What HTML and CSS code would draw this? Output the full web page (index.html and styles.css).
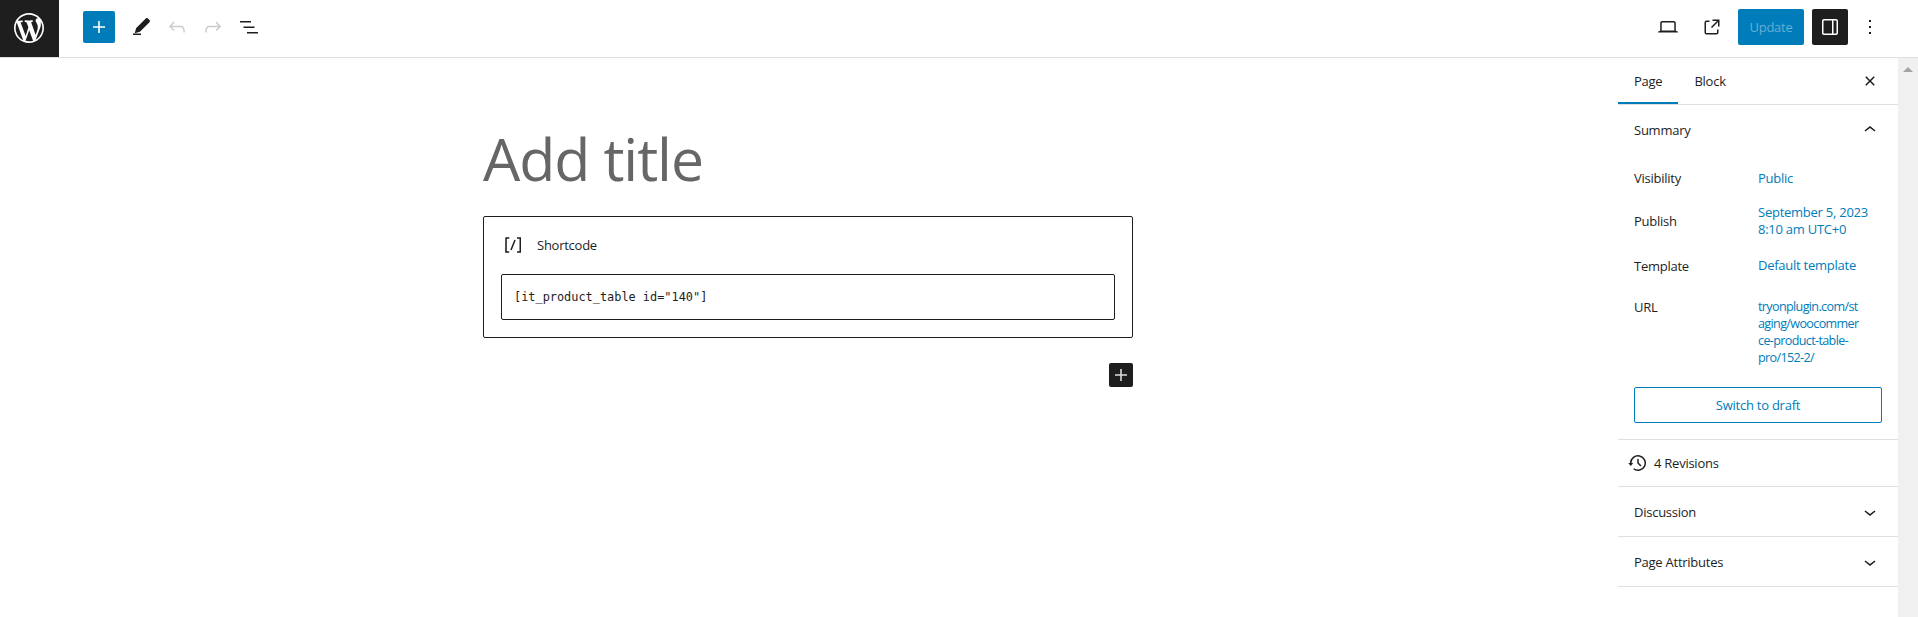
FILE: index.html
```html
<!DOCTYPE html>
<html lang="en">
<head>
    <meta charset="UTF-8">
    <meta name="viewport" content="width=device-width, initial-scale=1.0">
    <title>Edit Page</title>
    <link rel="stylesheet" href="styles.css">
</head>
<body>
    <!-- Top Toolbar -->
    <header class="topbar">
        <a class="logo" href="#">
            <svg width="30" height="30" viewBox="0 0 20 20"><path d="M20 10c0-5.51-4.49-10-10-10C4.48 0 0 4.49 0 10c0 5.52 4.48 10 10 10 5.51 0 10-4.48 10-10zM7.78 15.37L4.37 6.22c.55-.02 1.17-.08 1.17-.08.5-.06.44-1.13-.06-1.11 0 0-1.45.11-2.37.11-.18 0-.37 0-.58-.01C4.12 2.69 6.87 1.11 10 1.11c2.33 0 4.45.87 6.05 2.34-.68-.11-1.65.39-1.65 1.58 0 .74.45 1.36.9 2.1.35.61.55 1.36.55 2.46 0 1.49-1.4 5-1.4 5l-3.03-8.37c.54-.02.82-.17.82-.17.5-.05.44-1.25-.06-1.22 0 0-1.44.12-2.38.12-.87 0-2.33-.12-2.33-.12-.5-.03-.56 1.2-.06 1.22l.92.08 1.26 3.41zM17.41 10c.24-.64.74-1.87.43-4.25.7 1.29 1.05 2.71 1.05 4.25 0 3.29-1.73 6.24-4.4 7.78.97-2.59 1.94-5.2 2.92-7.78zM6.1 18.09C3.12 16.65 1.11 13.53 1.11 10c0-1.3.23-2.48.72-3.59C3.25 10.3 4.67 14.2 6.1 18.09zm4.03-6.63l2.58 6.98c-.86.29-1.76.45-2.71.45-.79 0-1.57-.11-2.29-.33.81-2.38 1.62-4.74 2.42-7.1z"/></svg>
        </a>
        <div class="tools">
            <button class="add-btn"><svg width="24" height="24" viewBox="0 0 24 24"><path d="M18 11.2h-5.2V6h-1.6v5.2H6v1.6h5.2V18h1.6v-5.2H18z"/></svg></button>
            <button class="icon-btn"><svg width="24" height="24" viewBox="0 0 24 24"><path d="M4 20h8v-1.5H4V20zM18.9 3.5c-.6-.6-1.5-.6-2.1 0l-9.6 9.6-1.5 5.2 5.2-1.5 9.6-9.6c.6-.6.6-1.5 0-2.1l-1.6-1.6z"/></svg></button>
            <button class="icon-btn disabled"><svg width="24" height="24" viewBox="0 0 24 24"><path d="M18.3 11.7c-.6-.6-1.4-.9-2.3-.9H6.7l2.9-3.3-1.1-1-4.5 5L8.5 16l1-1-2.7-2.7H16c.5 0 .9.2 1.3.5 1 1 1 3.4 1 4.5v.3h1.5v-.2c0-1.5 0-4.3-1.5-5.7z"/></svg></button>
            <button class="icon-btn disabled"><svg width="24" height="24" viewBox="0 0 24 24"><path d="M15.6 6.5l-1.1 1 2.9 3.3H8c-.9 0-1.7.3-2.3.9-1.4 1.5-1.4 4.2-1.4 5.6v.2h1.5v-.3c0-1.1 0-3.5 1-4.5.3-.3.7-.5 1.3-.5h9.2L14.5 15l1.1 1.1 4.6-4.6-4.6-5z"/></svg></button>
            <button class="icon-btn"><svg width="24" height="24" viewBox="0 0 24 24"><path d="M3 6h11v1.5H3V6zm3.5 5.5h11V13h-11v-1.5zM21 17H10v1.5h11V17z"/></svg></button>
        </div>
        <div class="actions">
            <button class="icon-btn"><svg width="24" height="24" viewBox="0 0 24 24"><path d="M20.5 16h-.7V8c0-1.1-.9-2-2-2H6.2c-1.1 0-2 .9-2 2v8h-.7c-.8 0-1.5.7-1.5 1.5h20c0-.8-.7-1.5-1.5-1.5zM5.7 8c0-.3.2-.5.5-.5h11.6c.3 0 .5.2.5.5v7.6H5.7V8z"/></svg></button>
            <button class="icon-btn view-btn"><svg width="24" height="24" viewBox="0 0 24 24"><path d="M19.5 4.5h-7V6h4.44l-5.97 5.97 1.06 1.06L18 7.06v4.44h1.5v-7Zm-13 1a2 2 0 0 0-2 2v10a2 2 0 0 0 2 2h10a2 2 0 0 0 2-2v-3H17v3a.5.5 0 0 1-.5.5h-10a.5.5 0 0 1-.5-.5v-10a.5.5 0 0 1 .5-.5h3V5.5h-3Z"/></svg></button>
            <button class="update-btn">Update</button>
            <button class="icon-btn toggle-btn"><svg width="24" height="24" viewBox="0 0 24 24"><path d="M18 4H6c-1.1 0-2 .9-2 2v12c0 1.1.9 2 2 2h12c1.1 0 2-.9 2-2V6c0-1.1-.9-2-2-2zm-4 14.5H6c-.3 0-.5-.2-.5-.5V6c0-.3.2-.5.5-.5h8v13zm4.5-.5c0 .3-.2.5-.5.5h-2.5v-13H18c.3 0 .5.2.5.5v12z"/></svg></button>
            <button class="icon-btn more-btn"><svg width="24" height="24" viewBox="0 0 24 24"><path d="M13 19h-2v-2h2v2zm0-6h-2v-2h2v2zm0-6h-2V5h2v2z"/></svg></button>
        </div>
    </header>

    <div class="workspace">
        <!-- Editor Canvas -->
        <main class="editor">
            <div class="canvas">
                <h1 class="post-title">Add title</h1>
                <div class="shortcode-block">
                    <div class="shortcode-label">
                        <svg width="24" height="24" viewBox="0 0 24 24"><path d="M16 4.2v1.5h2.5v12.5H16v1.5h4V4.2h-4zM4.2 19.8h4v-1.5H5.8V5.8h2.5V4.2h-4l-.1 15.6zm5.1-3.1l1.4.6 4-10-1.4-.6-4 10z"/></svg>
                        <span>Shortcode</span>
                    </div>
                    <div class="shortcode-input">[it_product_table id="140"]</div>
                </div>
                <div class="inserter-row">
                    <button class="block-add"><svg width="24" height="24" viewBox="0 0 24 24"><path d="M18 11.2h-5.2V6h-1.6v5.2H6v1.6h5.2V18h1.6v-5.2H18z"/></svg></button>
                </div>
            </div>
        </main>

        <!-- Settings Sidebar -->
        <aside class="sidebar">
            <div class="tabs">
                <div class="tab active">Page</div>
                <div class="tab">Block</div>
                <button class="icon-btn close-btn"><svg width="24" height="24" viewBox="0 0 24 24"><path d="M12 13.06l3.712 3.713 1.061-1.06L13.061 12l3.712-3.712-1.06-1.06L12 10.938 8.288 7.227l-1.061 1.06L10.939 12l-3.712 3.712 1.06 1.061L12 13.061z"/></svg></button>
            </div>

            <section class="panel summary">
                <div class="panel-head">
                    <span>Summary</span>
                    <svg width="24" height="24" viewBox="0 0 24 24"><path d="M6.5 12.4L12 8l5.5 4.4-.9 1.2L12 10l-4.5 3.6-1-1.2z"/></svg>
                </div>
                <div class="summary-rows">
                    <div class="row row-visibility"><span class="row-label">Visibility</span><a class="row-value">Public</a></div>
                    <div class="row row-publish"><span class="row-label">Publish</span><a class="row-value">September 5, 2023<br>8:10 am UTC+0</a></div>
                    <div class="row row-template"><span class="row-label">Template</span><a class="row-value">Default template</a></div>
                    <div class="row row-url"><span class="row-label">URL</span><a class="row-value url-value">tryonplugin.com/st<br>aging/woocommer<br>ce-product-table-<br>pro/152-2/</a></div>
                </div>
                <button class="draft-btn">Switch to draft</button>
            </section>

            <section class="panel revisions">
                <svg width="24" height="24" viewBox="0 0 24 24"><path d="M5.5 12h1.75l-2.5 3-2.5-3H4a8 8 0 113.134 6.35l.907-1.194A6.5 6.5 0 105.5 12zm9.53 1.97l-2.28-2.28V8.5a.75.75 0 00-1.5 0V12a.747.747 0 00.218.529l2.5 2.5a.75.75 0 101.06-1.061z"/></svg>
                <span>4 Revisions</span>
            </section>

            <section class="panel collapsed">
                <div class="panel-head">
                    <span>Discussion</span>
                    <svg width="24" height="24" viewBox="0 0 24 24"><path d="M17.5 11.6L12 16l-5.5-4.4.9-1.2L12 14l4.5-3.6 1 1.2z"/></svg>
                </div>
            </section>

            <section class="panel collapsed">
                <div class="panel-head">
                    <span>Page Attributes</span>
                    <svg width="24" height="24" viewBox="0 0 24 24"><path d="M17.5 11.6L12 16l-5.5-4.4.9-1.2L12 14l4.5-3.6 1 1.2z"/></svg>
                </div>
            </section>
        </aside>

        <!-- Window Scrollbar -->
        <div class="scrollbar"><span class="scroll-arrow"></span></div>
    </div>
</body>
</html>
```

FILE: styles.css
```css
/* General Reset */
* {
    box-sizing: border-box;
    margin: 0;
    padding: 0;
}
body {
    height: 617px;
    overflow: hidden;
    background: #fff;
    color: #1e1e1e;
    font-family: "Open Sans", Arial, sans-serif;
    font-size: 13px;
    letter-spacing: -0.25px;
}
button {
    border: none;
    background: none;
    font: inherit;
    letter-spacing: inherit;
    color: inherit;
}
svg {
    display: block;
    fill: currentColor;
}

/* Top Toolbar */
.topbar {
    display: flex;
    align-items: center;
    height: 58px;
    border-bottom: 1px solid #e0e0e0;
}
.logo {
    display: flex;
    align-items: center;
    justify-content: center;
    width: 59px;
    height: 57px;
    padding: 0 1px 1px 0;
    background: #1e1e1e;
    color: #fff;
}
.tools {
    display: flex;
    align-items: center;
    margin-left: 24px;
    margin-bottom: 3px;
}
.add-btn {
    display: flex;
    align-items: center;
    justify-content: center;
    width: 32px;
    height: 32px;
    margin-right: 8px;
    border-radius: 2px;
    background: #007cba;
    color: #fff;
}
.icon-btn {
    display: flex;
    align-items: center;
    justify-content: center;
    width: 36px;
    height: 36px;
    border-radius: 2px;
}
.disabled {
    color: #ccc;
}
.actions {
    display: flex;
    align-items: center;
    margin-left: auto;
    margin-bottom: 3px;
    padding-right: 30px;
}
.view-btn {
    margin-left: 8px;
    margin-right: 8px;
}
.update-btn {
    width: 66px;
    height: 36px;
    margin-right: 8px;
    border-radius: 2px;
    background: #007cba;
    color: #66aed6;
}
.toggle-btn {
    background: #1e1e1e;
    color: #fff;
}
.more-btn {
    margin-left: 4px;
}

/* Main Layout */
.workspace {
    display: flex;
    height: 559px;
}
.editor {
    flex: 1;
    display: flex;
    justify-content: center;
    padding-right: 2px;
}
.canvas {
    width: 650px;
}
.post-title {
    height: 158px;
    padding-top: 71px;
    font-size: 59px;
    font-weight: 400;
    line-height: 1;
    letter-spacing: -1.1px;
    color: #666;
}

/* Shortcode Block */
.shortcode-block {
    height: 122px;
    padding: 0 17px;
    border: 1px solid #1e1e1e;
    border-radius: 2px;
}
.shortcode-label {
    display: flex;
    align-items: center;
    gap: 12px;
    height: 57px;
    padding-bottom: 2px;
}
.shortcode-input {
    height: 46px;
    padding-left: 12px;
    border: 1px solid #1e1e1e;
    border-radius: 2px;
    font-family: "DejaVu Sans Mono", monospace;
    font-size: 11.9px;
    letter-spacing: 0;
    line-height: 44px;
}
.inserter-row {
    display: flex;
    justify-content: flex-end;
    margin-top: 25px;
}
.block-add {
    display: flex;
    align-items: center;
    justify-content: center;
    width: 24px;
    height: 24px;
    border-radius: 2px;
    background: #1e1e1e;
    color: #ddd;
}

/* Settings Sidebar */
.sidebar {
    width: 280px;
}
.tabs {
    display: flex;
    align-items: center;
    height: 47px;
    border-bottom: 1px solid #e0e0e0;
}
.tab {
    height: 46px;
    padding: 0 16px;
    line-height: 46px;
    font-weight: 500;
}
.tab.active {
    box-shadow: inset 0 -2px 0 #007cba;
}
.close-btn {
    margin-left: auto;
    margin-right: 10px;
}
.panel {
    border-bottom: 1px solid #e0e0e0;
}
.panel-head {
    display: flex;
    align-items: center;
    justify-content: space-between;
    height: 49px;
    padding: 0 16px;
    font-weight: 500;
}
.summary {
    height: 335px;
}
.summary-rows {
    margin-top: 2px;
}
.row {
    display: flex;
    align-items: center;
    padding-left: 16px;
}
.row-label {
    width: 124px;
}
.row-value {
    width: 140px;
    color: #007cba;
    line-height: 17px;
}
.url-value {
    font-size: 12.6px;
    letter-spacing: -0.65px;
    white-space: nowrap;
}
.row-visibility {
    height: 44px;
}
.row-publish {
    height: 41px;
}
.row-template {
    height: 49px;
}
.row-url {
    align-items: flex-start;
    margin-top: 8px;
}
.draft-btn {
    display: block;
    width: 248px;
    height: 36px;
    margin: 21px 0 0 16px;
    border: 1px solid #007cba;
    border-radius: 2px;
    color: #007cba;
}
.revisions {
    display: flex;
    align-items: center;
    gap: 4px;
    height: 47px;
    padding-left: 8px;
    font-weight: 500;
}
.collapsed {
    height: 50px;
}

/* Window Scrollbar */
.scrollbar {
    width: 20px;
    background: #f0f0f0;
    padding-top: 9px;
}
.scroll-arrow {
    display: block;
    width: 0;
    height: 0;
    margin: 0 auto;
    border-left: 5px solid transparent;
    border-right: 5px solid transparent;
    border-bottom: 5px solid #a3a3a3;
}
```
